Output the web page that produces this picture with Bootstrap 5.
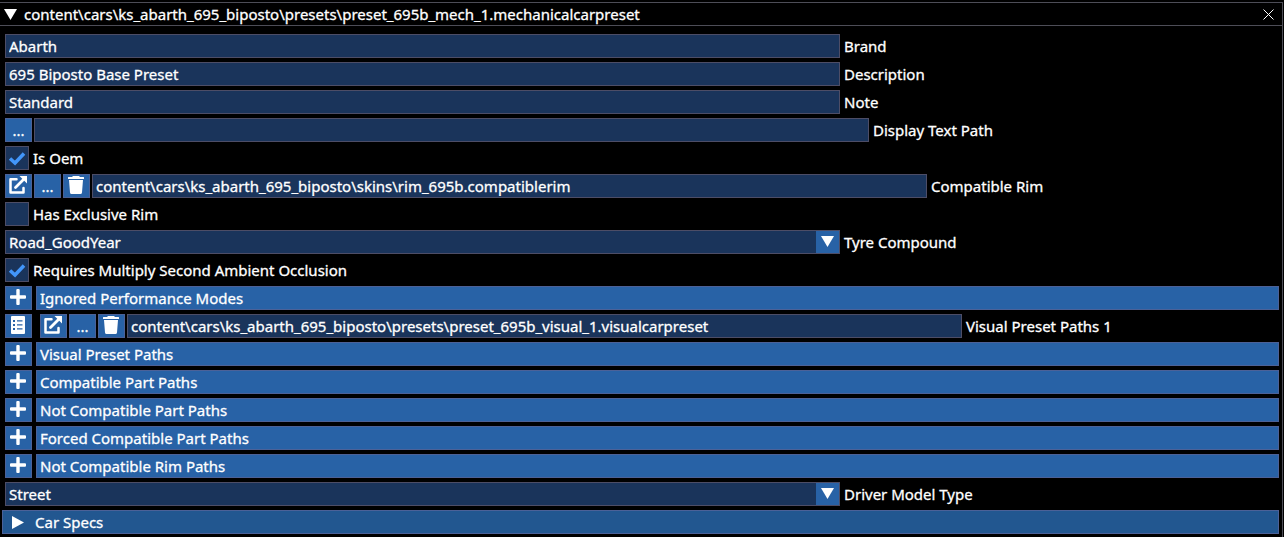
<!DOCTYPE html>
<html lang="en">
<head>
<meta charset="utf-8">
<meta name="viewport" content="width=device-width, initial-scale=1">
<title>Mechanical car preset</title>
<link href="https://cdn.jsdelivr.net/npm/bootstrap@5.3.0/dist/css/bootstrap.min.css" rel="stylesheet">
<style>
  :root { --line: #4d4d66; --accent-line: #4c6197; --field: #1a345b; --accent: #2862a6; --header: #225790; }
  body { background: #000; color: #fff; font: 400 15px/22px "Noto Sans", sans-serif; -webkit-text-stroke: .3px; }
  .inspector { margin: 2px 1px 0 0; border: 1px solid #4d4d57; border-width: 1px 1px 0 0; min-height: calc(100vh - 2px); }
  .titlebar { height: 23px; border-bottom: 1px solid #4d4d57; padding: 0 8px 0 4px; }
  .titlebar-caption { gap: 7px; }
  .titlebar h1 { font: inherit; line-height: 22px; }
  .props { padding: 8px 3px 3px 5px; gap: 4px; }
  .prop { height: 24px; gap: 4px; }
  .prop label { line-height: 24px; }
  .tools { gap: 2px; }
  .entry { margin-left: 4px; }
  .field, .pick { width: 65vw; width: round(up, 65vw, 1px); height: 24px; padding: 0 3px; border: 1px solid var(--line); border-radius: 0; background: var(--field); color: inherit; font: inherit; line-height: 22px; outline-offset: -1px; }
  .pick { appearance: none; }
  .combo { position: relative; }
  .combo svg { position: absolute; top: 1px; right: 1px; width: 23px; height: 22px; background: var(--accent); pointer-events: none; }
  .tool { width: 27px; height: 24px; padding: 0; border: 1px solid var(--accent-line); border-radius: 0; background: var(--accent); color: inherit; font: inherit; line-height: 22px; display: flex; justify-content: center; align-items: center; }
  .glyph { padding: 0 1px 2px 0; }
  .tool svg, .combo svg, .titlebar svg, .specs svg { display: block; fill: #fff; }
  .group-bar, .specs { height: 24px; padding: 0 3px; border: 1px solid var(--accent-line); border-radius: 0; background: var(--accent); color: inherit; font: inherit; line-height: 22px; text-align: left; }
  .specs { background: var(--header); margin-left: -3px; padding-left: 9px; gap: 11px; }
  .tick { appearance: none; width: 24px; height: 24px; margin: 0; border: 1px solid var(--line); background: var(--field) center / 22px 22px no-repeat; }
  .tick:checked { background-image: url("data:image/svg+xml,%3Csvg xmlns='http://www.w3.org/2000/svg' viewBox='0 0 22 22'%3E%3Cpath d='M4 11.500l5 4.500L18 6.500' fill='none' stroke='%234296fa' stroke-width='3.500'/%3E%3C/svg%3E"); }
  .bare { padding: 0; border: 0; background: none; }
</style>
</head>
<body>
<svg class="d-none" aria-hidden="true">
  <symbol id="i-open" viewBox="0 0 18 18"><path d="M7.500 3.300H1.500V16.500H14.500V12" fill="none" stroke="#fff" stroke-width="2.500" stroke-linejoin="round" stroke-linecap="round"/><path d="M6.500 11.500L15 3" fill="none" stroke="#fff" stroke-width="2.800" stroke-linecap="round"/><path d="M10.500 0H18V7.500Z"/></symbol>
  <symbol id="i-trash" viewBox="0 0 16 18"><path d="M5 0h6l1 1h3.500q.5 0 .5.500V3H0V1.500Q0 1 .5 1H4zM1 4h14l-1 12.500q-.2 1.500-1.500 1.500h-9Q2.200 18 2 16.500z"/></symbol>
  <symbol id="i-plus" viewBox="0 0 16 16"><path d="M6.300 1q0-1 1-1h1.400q1 0 1 1v5.300H15q1 0 1 1v1.400q0 1-1 1H9.700V15q0 1-1 1H7.300q-1 0-1-1V9.700H1q-1 0-1-1V7.300q0-1 1-1h5.300z"/></symbol>
  <symbol id="i-list" viewBox="0 0 14 18"><path fill-rule="evenodd" d="M1 0h12q1 0 1 1v16q0 1-1 1H1q-1 0-1-1V1q0-1 1-1zM2 4v2h2V4zm4 .3v1.200h5.500V4.300zM2 8v2h2V8zm4 .3v1.200h5.500V8.300zM2 12v2h2v-2zm4 .3v1.200h5.500v-1.200z"/></symbol>
</svg>

<main class="inspector">
  <header class="titlebar d-flex align-items-center justify-content-between">
    <div class="titlebar-caption d-flex align-items-center">
      <button class="bare" aria-label="Collapse"><svg width="13" height="11"><path d="M0 0h13L6.500 11z"/></svg></button>
      <h1 class="m-0">content\cars\ks_abarth_695_biposto\presets\preset_695b_mech_1.mechanicalcarpreset</h1>
    </div>
    <button class="bare" aria-label="Close"><svg width="11" height="11"><path d="M.5.500l10 10M10.500.500l-10 10" stroke="#fff"/></svg></button>
  </header>

  <form class="props d-flex flex-column">
    <div class="prop d-flex"><input class="field" id="brand" value="Abarth"><label for="brand">Brand</label></div>
    <div class="prop d-flex"><input class="field" id="desc" value="695 Biposto Base Preset"><label for="desc">Description</label></div>
    <div class="prop d-flex"><input class="field" id="note" value="Standard"><label for="note">Note</label></div>
    <div class="prop d-flex">
      <div class="tools d-flex"><button type="button" class="tool">...</button><input class="field" id="textpath"></div>
      <label for="textpath">Display Text Path</label>
    </div>
    <div class="prop d-flex"><input type="checkbox" class="tick" id="oem" checked><label for="oem">Is Oem</label></div>
    <div class="prop d-flex">
      <div class="tools d-flex">
        <button type="button" class="tool glyph" aria-label="Open"><svg width="18" height="18"><use href="#i-open"/></svg></button>
        <button type="button" class="tool">...</button>
        <button type="button" class="tool glyph" aria-label="Delete"><svg width="16" height="18"><use href="#i-trash"/></svg></button>
        <input class="field" id="rim" value="content\cars\ks_abarth_695_biposto\skins\rim_695b.compatiblerim">
      </div>
      <label for="rim">Compatible Rim</label>
    </div>
    <div class="prop d-flex"><input type="checkbox" class="tick" id="exclusive"><label for="exclusive">Has Exclusive Rim</label></div>
    <div class="prop d-flex">
      <div class="combo"><select class="pick" id="tyre"><option>Road_GoodYear</option></select><svg viewBox="0 0 23 22"><path d="M5 5h13L11.500 16z"/></svg></div>
      <label for="tyre">Tyre Compound</label>
    </div>
    <div class="prop d-flex"><input type="checkbox" class="tick" id="occlusion" checked><label for="occlusion">Requires Multiply Second Ambient Occlusion</label></div>
    <div class="prop d-flex"><button type="button" class="tool glyph" aria-label="Add"><svg width="16" height="16"><use href="#i-plus"/></svg></button><button type="button" class="group-bar flex-grow-1">Ignored Performance Modes</button></div>
    <div class="prop d-flex">
      <button type="button" class="tool glyph" aria-label="Entry menu"><svg width="14" height="18"><use href="#i-list"/></svg></button>
      <div class="tools entry d-flex">
        <button type="button" class="tool glyph" aria-label="Open"><svg width="18" height="18"><use href="#i-open"/></svg></button>
        <button type="button" class="tool">...</button>
        <button type="button" class="tool glyph" aria-label="Delete"><svg width="16" height="18"><use href="#i-trash"/></svg></button>
        <input class="field" id="visual" value="content\cars\ks_abarth_695_biposto\presets\preset_695b_visual_1.visualcarpreset">
      </div>
      <label for="visual">Visual Preset Paths 1</label>
    </div>
    <div class="prop d-flex"><button type="button" class="tool glyph" aria-label="Add"><svg width="16" height="16"><use href="#i-plus"/></svg></button><button type="button" class="group-bar flex-grow-1">Visual Preset Paths</button></div>
    <div class="prop d-flex"><button type="button" class="tool glyph" aria-label="Add"><svg width="16" height="16"><use href="#i-plus"/></svg></button><button type="button" class="group-bar flex-grow-1">Compatible Part Paths</button></div>
    <div class="prop d-flex"><button type="button" class="tool glyph" aria-label="Add"><svg width="16" height="16"><use href="#i-plus"/></svg></button><button type="button" class="group-bar flex-grow-1">Not Compatible Part Paths</button></div>
    <div class="prop d-flex"><button type="button" class="tool glyph" aria-label="Add"><svg width="16" height="16"><use href="#i-plus"/></svg></button><button type="button" class="group-bar flex-grow-1">Forced Compatible Part Paths</button></div>
    <div class="prop d-flex"><button type="button" class="tool glyph" aria-label="Add"><svg width="16" height="16"><use href="#i-plus"/></svg></button><button type="button" class="group-bar flex-grow-1">Not Compatible Rim Paths</button></div>
    <div class="prop d-flex">
      <div class="combo"><select class="pick" id="driver"><option>Street</option></select><svg viewBox="0 0 23 22"><path d="M5 5h13L11.500 16z"/></svg></div>
      <label for="driver">Driver Model Type</label>
    </div>
    <button type="button" class="specs d-flex align-items-center"><svg width="12" height="13"><path d="M0 0v13L12 6.500z"/></svg>Car Specs</button>
  </form>
</main>
<script src="https://cdn.jsdelivr.net/npm/bootstrap@5.3.0/dist/js/bootstrap.bundle.min.js"></script>
</body>
</html>
